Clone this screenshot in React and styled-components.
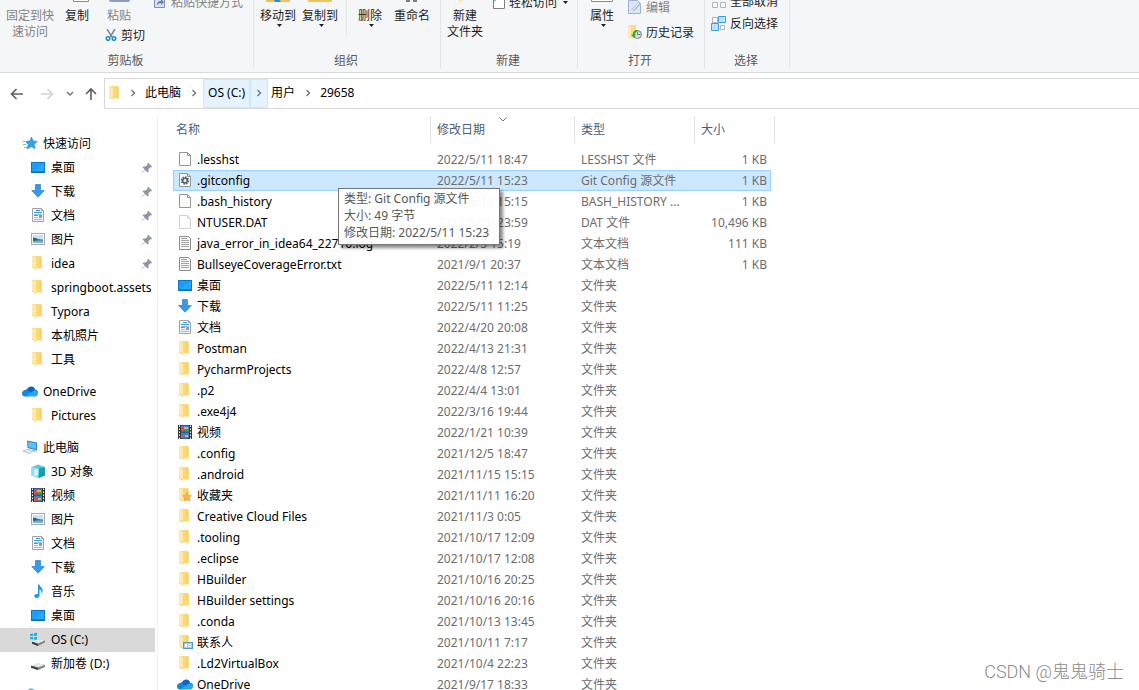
import React from "react";
import styled, { createGlobalStyle, css } from "styled-components";

const GlobalStyle = createGlobalStyle`
  * { box-sizing: border-box; }
  body {
    margin: 0;
    background: #fff;
    color: #000;
    font: 12px/17px "Noto Sans", "Noto Sans CJK SC", sans-serif;
  }
  button {
    font: inherit;
    color: inherit;
    background: none;
    border: 0;
    padding: 0;
  }
  svg { display: block; flex: none; }
  ul { list-style: none; margin: 0; padding: 0; }
`;

const Window = styled.div`
  position: relative;
  display: flex;
  flex-direction: column;
  height: 100vh;
  overflow: hidden;
`;

/* ---------- ribbon ---------- */

const Ribbon = styled.header`
  display: flex;
  flex: none;
  padding-bottom: 3px;
  background: #f5f6f7;
  border-bottom: 1px solid #dadbdc;
`;

const Group = styled.section`
  width: ${(p) => p.$width}px;
  border-right: 1px solid #e2e3e4;
`;

const Tools = styled.div`
  display: flex;
  align-items: flex-end;
  height: 52px;
  padding: 0 0 7px ${(p) => p.$indent || 0}px;
  overflow: hidden;
`;

const GroupLabel = styled.div`
  height: 17px;
  padding: 1px 2px 0 0;
  line-height: 16px;
  text-align: center;
  color: #5a5a5a;
`;

const BigButton = styled.button`
  display: flex;
  flex-direction: column;
  flex: none;
  align-items: center;
  width: ${(p) => p.$width || 42}px;
  height: 73px;
  color: ${(p) => (p.disabled ? "#838383" : "#1e1e1e")};
  line-height: 16px;
  white-space: nowrap;

  svg:first-child { margin-bottom: 4px; }
`;

const PasteColumn = styled.div`
  display: flex;
  flex-direction: column;
  width: 49px;
  margin-left: 11px;
`;

const PasteButton = styled(BigButton)`
  width: 28px;
  height: 53px;
`;

const SmallColumn = styled.div`
  display: flex;
  flex-direction: column;
  flex: none;
  gap: ${(p) => p.$gap || 0}px;
  padding-bottom: ${(p) => p.$bottom}px;
  margin-left: ${(p) => p.$left || 0}px;
`;

const SmallButton = styled.button`
  display: flex;
  align-items: center;
  gap: 4px;
  height: ${(p) => p.$height || 22}px;
  color: ${(p) => (p.disabled ? "#838383" : "#1e1e1e")};
  white-space: nowrap;
`;

const Divider = styled.div`
  align-self: flex-start;
  width: 1px;
  height: 35px;
  margin: 0 2px 0 5px;
  background: #e2e3e4;
`;

const LabelArrow = styled.svg`
  margin-left: 2px;
`;

/* ---------- address bar ---------- */

const NavBar = styled.nav`
  display: flex;
  flex: none;
  align-items: center;
  padding: 5px 0 0;
`;

const NavButtons = styled.div`
  display: flex;
  align-items: center;
  width: 104px;
  padding-left: 10px;
`;

const NavButton = styled.button`
  display: flex;
  justify-content: center;
  width: ${(p) => p.$width}px;
  margin-right: ${(p) => p.$gap || 0}px;
`;

const Address = styled.div`
  display: flex;
  flex: 1;
  align-items: flex-start;
  height: 31px;
  padding-left: 2px;
  border: solid #d9d9d9;
  border-width: 1px 0 1px 1px;

  > svg { margin-top: 6px; }
`;

const Crumb = styled.button`
  display: flex;
  align-items: center;
  height: 29px;
  padding: 0 ${(p) => (p.$active ? 5 : 3)}px 2px;
  ${(p) => p.$active && css`
    background: #e5f3ff;
    box-shadow: inset 0 0 0 1px #cce8ff;
  `}
`;

const CrumbArrow = styled(Crumb)`
  justify-content: center;
  width: ${(p) => (p.$active ? 18 : 19)}px;
  padding: 0 0 1px;
`;

/* ---------- body ---------- */

const Body = styled.div`
  display: flex;
  flex: 1;
  min-height: 0;
  padding-top: 7px;
`;

const Sidebar = styled.aside`
  flex: none;
  width: 158px;
  padding: 16px 2px 0 0;
  border-right: 1px solid #f0f0f0;
  overflow: hidden;
`;

const TreeSection = styled.ul`
  margin-bottom: 8px;
`;

const TreeLink = styled.a`
  display: flex;
  align-items: center;
  gap: 5px;
  height: 24px;
  padding: 0 0 2px ${(p) => (p.$root ? 22 : 30)}px;
  color: #000;
  text-decoration: none;
  white-space: nowrap;
  background: ${(p) => (p.$active ? "#d9d9d9" : "transparent")};

  .pin { margin: 2px 2px 0 auto; }
`;

const Files = styled.table`
  display: block;
  flex: none;
  margin-left: 15px;
`;

const Head = styled.thead`
  display: block;
`;

const HeadRow = styled.tr`
  display: grid;
  grid-template-columns: 258px 144px 120px 80px;
  height: 27px;
  margin-bottom: 6px;
`;

const HeadCell = styled.th`
  position: relative;
  padding: 0 0 0 ${(p) => (p.$first ? 3 : 6)}px;
  border-right: 1px solid #e5e5e5;
  color: #4c607a;
  font-weight: 400;
  line-height: 27px;
  text-align: left;
`;

const SortMark = styled.svg`
  position: absolute;
  top: 1px;
  left: calc(50% - 4px);
`;

const Rows = styled.tbody`
  display: block;
`;

const Row = styled.tr`
  display: grid;
  grid-template-columns: 258px 144px 120px 76px;
  width: 598px;
  height: 21px;
  position: relative;
  ${(p) => p.$selected && css`
    z-index: 1;
    background: #cce8ff;
    box-shadow: inset 0 0 0 1px #99d1ff;
  `}
`;

const Cell = styled.td`
  padding: 0 4px 0 6px;
  color: #6d6d6d;
  line-height: 21px;
  white-space: nowrap;
  text-align: ${(p) => (p.$right ? "right" : "left")};
`;

const NameCell = styled(Cell)`
  display: flex;
  gap: 4px;
  padding-left: 4px;
  color: #000;

  > svg { margin-top: 2px; }
`;

const Tooltip = styled.div`
  position: absolute;
  top: 18px;
  left: 165px;
  min-width: 162px;
  padding: 1px 5px 3px;
  border: 1px solid #767676;
  background: rgba(255, 255, 255, 0.95);
  box-shadow: 3px 3px 3px rgba(0, 0, 0, 0.45);
  color: #575757;
  line-height: 17px;
  white-space: nowrap;
`;

const Watermark = styled.div`
  position: absolute;
  right: 15px;
  bottom: 6px;
  color: #8c8c8c;
  font: 300 18px/24px Roboto, "Noto Sans CJK SC", sans-serif;
`;

/* ---------- icons ---------- */

const Svg = ({ size = 16, children, ...rest }) => (
  <svg width={size} height={size} viewBox={`0 0 ${size} ${size}`} aria-hidden="true" {...rest}>
    {children}
  </svg>
);

const FolderShape = () => (
  <>
    <path d="M2 1h8.500v12H6L2 12z" fill="#f9dc85" />
    <path d="M5.500 1.500h6v8l.5.5v3.500H6z" fill="#fbd872" />
    <path d="M9.500 1.500h2v8h-2z" fill="#f6cf66" />
    <path d="M2 1l4 1.600v12l-4-2z" fill="#fdeab2" />
    <path d="M2 12.600l4 2v-.9l-4-1.600z" fill="#eec35a" />
  </>
);

const icons = {
  folder: () => <Svg><FolderShape /></Svg>,
  favorites: () => (
    <Svg>
      <FolderShape />
      <path d="M10 5.500l1.400 2.700 3.100.5-2.200 2.100.5 3.200-2.800-1.500-2.700 1.500.5-3.200-2.200-2.100 3-.5z" fill="#fbb54a" stroke="#e8962d" strokeWidth=".6" />
    </Svg>
  ),
  contacts: () => (
    <Svg>
      <FolderShape />
      <rect x="6.500" y="8.500" width="9" height="6" fill="#9fd0ea" stroke="#4f9cc4" />
      <path d="M8 10h2v3H8z" fill="#fff" />
      <path d="M11 10.500h3M11 12.500h3" stroke="#fff" />
    </Svg>
  ),
  desktop: () => (
    <Svg>
      <rect x="1.500" y="3.500" width="13" height="10" fill="#1a9dfb" stroke="#0b77c9" />
      <path d="M2 13L14 4v9z" fill="#35adff" opacity=".6" />
      <path d="M2 13h12" stroke="#0a5fa5" />
    </Svg>
  ),
  download: () => (
    <Svg><path d="M5.500 1.500h5v6h3.800L8 14.200 1.700 7.500h3.800z" fill="#3a98e8" stroke="#2781d2" strokeWidth=".7" /></Svg>
  ),
  document: () => (
    <Svg>
      <path d="M2.500 1.500h9l2 2v11h-11z" fill="#f3f6f8" stroke="#9da5aa" />
      <path d="M11.500 1.500v2h2" fill="none" stroke="#9da5aa" />
      <path d="M6 3.500h4M4 5.500h8M4 8.500h4" stroke="#38a0dc" />
      <path d="M4 7.500h8M9 9.500h3M4 10.500h4M4 12.500h8" stroke="#a2bac7" />
      <path d="M9 8h3v3H9z" fill="#6fa8c9" />
    </Svg>
  ),
  picture: () => (
    <Svg>
      <rect x="1.500" y="2.500" width="13" height="11" fill="#fff" stroke="#a5a9ad" />
      <path d="M3 4h10v8H3z" fill="#c4e3f7" />
      <path d="M3 7c3-1 5 2 10 1.500V10H3z" fill="#3d7196" />
      <path d="M3 9.500h10V12H3z" fill="#78b4d4" />
      <path d="M3 6.500c2 .5 3 2 5 2.500l-5 1z" fill="#2e684f" />
    </Svg>
  ),
  video: () => (
    <Svg>
      <path d="M1 1h14v14H1z" fill="#34383d" />
      <path d="M4 1.500h8v6H4zM4 8.500h8v6H4z" fill="#3b7fdc" />
      <path d="M4 5l3-2v4.500H4zM4 12l3-1.500V14H4z" fill="#df513a" />
      <path d="M7 3h4v2H7zM8 11h3v2H8z" fill="#e9b936" />
      <path d="M8 5h4v2.500H8z" fill="#4c9c3f" />
      <path d="M2.500 1.500v14M13.500 1.500v14" stroke="#fff" strokeDasharray="1.500 1.500" />
    </Svg>
  ),
  star: () => (
    <Svg>
      <path d="M9.500 2l1.600 4 4.200.4-3.200 2.900 1 4.500-3.900-2.300-4 2.500 1.100-4.600-2.600-2.800 4.200-.6z" fill="#2fa4ea" stroke="#1b83c8" strokeWidth=".6" />
      <path d="M1 6.500h3M1 9.500h3M2 12.500h3" stroke="#6bbcf0" />
    </Svg>
  ),
  onedrive: () => (
    <Svg>
      <path d="M1.500 9.500C2 7 4 6.500 5 6.500c1-2.500 3-3.200 4.500-3 2 .2 3.300 1.500 3.700 3.200 2 .2 2.800 1.500 2.800 3L9 11z" fill="#0a66c2" />
      <path d="M0 10.500C0 8.500 1.500 7 3.500 7c1.500 0 2.500.6 3.500 1.200L13 12.500 3.500 13.600C1.200 13.600 0 12.200 0 10.500z" fill="#1387da" />
      <path d="M3 13.500L12 7.500c.5-.8 4 0 4 3 0 1.800-1.200 3.100-3 3.100H3.500z" fill="#28a8ea" />
    </Svg>
  ),
  computer: () => (
    <Svg>
      <path d="M5 1.500l10 2v8L5.500 9z" fill="#2d87cc" />
      <path d="M6 2.800l8 1.700v5.600L6.400 8.200z" fill="#5cc0f7" />
      <path d="M1 12l5-2 6 2-5 2.500z" fill="#e3e7ea" stroke="#a1a9ae" strokeWidth=".6" />
      <path d="M9 10.500l2 .5 3.500 1v1z" fill="#7d8a93" />
    </Svg>
  ),
  cube: () => (
    <Svg>
      <path d="M1.500 4L8 1.500 15 4v8.500L9 15l-7.500-2.500z" fill="#57cbdc" />
      <path d="M1.500 4l7 1.500V15l-7-2.500z" fill="#8fe2ec" />
      <path d="M8.500 5.500L15 4v8.500L8.500 15z" fill="#159fb5" />
      <path d="M4 7l4.500-1.500V12L4 13.300z" fill="#e6fbff" opacity=".7" />
    </Svg>
  ),
  music: () => (
    <Svg>
      <path d="M8 1.500h1.500c0 2.500 3.800 3 3 7-.3 1.300-.9 2-1.400 2.500.5-2.500.1-4-1.600-4.700v6c0 1.800-1.400 2.700-2.800 2.700S4.300 14.200 4.300 13c0-1.500 1.900-2.400 3.700-2z" fill="#159be8" />
    </Svg>
  ),
  drive: () => (
    <Svg>
      <path d="M1 11l7-2.500 7 1.500v2L8 15l-7-2.500z" fill="#808589" />
      <path d="M1 10.500L8 8l7 1.800-7 2.700z" fill="#e5e7e8" />
      <path d="M1 10.800l7 2V15l-7-2.300z" fill="#3c4144" />
    </Svg>
  ),
  osdrive: () => (
    <Svg>
      <path d="M2 11l6-2.500 7 1v2L8 15l-6-2.500z" fill="#808589" />
      <path d="M2 10.500L8 8l7 1.500-7 3z" fill="#e5e7e8" />
      <path d="M2 10.800l6 2V15l-6-2.300z" fill="#3c4144" />
      <path d="M0 3l3-.5V5H0zM3.800 2.300L7 1.800V5H3.800zM0 6h3v2.500L0 8zM3.800 6H7v3l-3.200-.4z" fill="#15b6ea" />
    </Svg>
  ),
  network: () => (
    <Svg>
      <path d="M5 4c2-3.500 6-3.500 9 0l1 8-8 2-4-2z" fill="#77aebd" />
    </Svg>
  ),
  blank: () => (
    <Svg>
      <path d="M2.500 1.500h8l3 3v10h-11z" fill="#fcfcfc" stroke="#969696" />
      <path d="M10.500 1.500v3h3" fill="none" stroke="#969696" />
    </Svg>
  ),
  faint: () => (
    <Svg>
      <path d="M2.500 1.500h8l3 3v10h-11z" fill="#fdfdfd" stroke="#d1d1d1" />
      <path d="M10.500 1.500v3h3" fill="none" stroke="#d1d1d1" />
    </Svg>
  ),
  config: () => (
    <Svg>
      <path d="M2.500 1.500h8l3 3v10h-11z" fill="#f8f8f8" stroke="#969696" />
      <path d="M10.500 1.500v3h3" fill="none" stroke="#969696" />
      <circle cx="8" cy="8.500" r="3.400" fill="none" stroke="#53646f" strokeWidth="1.600" strokeDasharray="1.600 1" />
      <circle cx="8" cy="8.500" r="2.300" fill="none" stroke="#53646f" strokeWidth="1.600" />
    </Svg>
  ),
  text: () => (
    <Svg>
      <path d="M2.500 1.500h9l2 2v11h-11z" fill="#fafafa" stroke="#8c8c8c" />
      <path d="M4 3.500h6M4 5.500h8M4 7.500h8M4 9.500h8M4 11.500h8" stroke="#a3a3a3" />
    </Svg>
  ),
};

const Icon = ({ name }) => icons[name]();

const Pin = () => (
  <Svg size={12} className="pin">
    <path d="M7.200.8l4 4-1.100.8-.9-.3-1.700 1.800.1 2.300-1 1-2.500-2.500L.8 11.300l-.3-.3 3.200-3.400L1.500 5.300l1-.9 2.200.1L6.600 2.700l-.3-1z" fill="#8c969e" />
  </Svg>
);

const DownArrow = () => (
  <LabelArrow width="5" height="3" viewBox="0 0 5 3" aria-hidden="true">
    <path d="M0 0h5L2.500 3z" fill="#1e1e1e" />
  </LabelArrow>
);

const Chevron = ({ down }) => (
  <Svg size={8}>
    <path d={down ? "M1 2l3 3 3-3" : "M2.500 1l3 3-3 3"} fill="none" stroke="#707070" strokeWidth="1.300" />
  </Svg>
);

const Big = ({ children }) => <Svg size={32}>{children}</Svg>;
const FolderBig = ({ arrow }) => (
  <Big>
    <path d="M4 6h24v24H4z" fill="#f8d775" />
    <path d="M4 28h24v2H4z" fill="#efc45c" />
    {arrow && <path d="M11 26h5l3 4h-6z" fill="#2d8ac8" />}
  </Big>
);

/* ---------- data ---------- */

const sections = [
  [
    ["star", "快速访问", "root"],
    ["desktop", "桌面", "pin"],
    ["download", "下载", "pin"],
    ["document", "文档", "pin"],
    ["picture", "图片", "pin"],
    ["folder", "idea", "pin"],
    ["folder", "springboot.assets"],
    ["folder", "Typora"],
    ["folder", "本机照片"],
    ["folder", "工具"],
  ],
  [
    ["onedrive", "OneDrive", "root"],
    ["folder", "Pictures"],
  ],
  [
    ["computer", "此电脑", "root"],
    ["cube", "3D 对象"],
    ["video", "视频"],
    ["picture", "图片"],
    ["document", "文档"],
    ["download", "下载"],
    ["music", "音乐"],
    ["desktop", "桌面"],
    ["osdrive", "OS (C:)", "active"],
    ["drive", "新加卷 (D:)"],
  ],
  [["network", "", "root"]],
];

const DIR = "文件夹";
const files = [
  ["blank", ".lesshst", "2022/5/11 18:47", "LESSHST 文件", "1 KB"],
  ["config", ".gitconfig", "2022/5/11 15:23", "Git Config 源文件", "1 KB"],
  ["blank", ".bash_history", "2022/5/11 15:15", "BASH_HISTORY ...", "1 KB"],
  ["faint", "NTUSER.DAT", "2022/5/10 23:59", "DAT 文件", "10,496 KB"],
  ["text", "java_error_in_idea64_22716.log", "2022/2/5 15:19", "文本文档", "111 KB"],
  ["text", "BullseyeCoverageError.txt", "2021/9/1 20:37", "文本文档", "1 KB"],
  ["desktop", "桌面", "2022/5/11 12:14", DIR],
  ["download", "下载", "2022/5/11 11:25", DIR],
  ["document", "文档", "2022/4/20 20:08", DIR],
  ["folder", "Postman", "2022/4/13 21:31", DIR],
  ["folder", "PycharmProjects", "2022/4/8 12:57", DIR],
  ["folder", ".p2", "2022/4/4 13:01", DIR],
  ["folder", ".exe4j4", "2022/3/16 19:44", DIR],
  ["video", "视频", "2022/1/21 10:39", DIR],
  ["folder", ".config", "2021/12/5 18:47", DIR],
  ["folder", ".android", "2021/11/15 15:15", DIR],
  ["favorites", "收藏夹", "2021/11/11 16:20", DIR],
  ["folder", "Creative Cloud Files", "2021/11/3 0:05", DIR],
  ["folder", ".tooling", "2021/10/17 12:09", DIR],
  ["folder", ".eclipse", "2021/10/17 12:08", DIR],
  ["folder", "HBuilder", "2021/10/16 20:25", DIR],
  ["folder", "HBuilder settings", "2021/10/16 20:16", DIR],
  ["folder", ".conda", "2021/10/13 13:45", DIR],
  ["contacts", "联系人", "2021/10/11 7:17", DIR],
  ["folder", ".Ld2VirtualBox", "2021/10/4 22:23", DIR],
  ["onedrive", "OneDrive", "2021/9/17 18:33", DIR],
];

/* ---------- page ---------- */

function RibbonBar() {
  return (
    <Ribbon>
      <Group $width={254}>
        <Tools>
          <BigButton $width={60} disabled>
            <Big />
            <span>固定到快</span>
            <span>速访问</span>
          </BigButton>
          <BigButton $width={34}>
            <Big><path d="M12.500 8.500h15v21h-15z" fill="#fff" stroke="#8d8d8d" /></Big>
            复制
          </BigButton>
          <PasteColumn>
            <PasteButton disabled>
              <Big><path d="M6 2h21v26q0 2-2 2H8q-2 0-2-2z" fill="#8c9cc0" /></Big>
              粘贴
            </PasteButton>
            <SmallButton $height={20}>
              <Svg size={12}>
                <path d="M2 0l5 8M10 0L5 8" stroke="#7e8a94" strokeWidth="1.500" />
                <circle cx="3" cy="9.500" r="1.800" fill="none" stroke="#1f8bd0" strokeWidth="1.500" />
                <circle cx="9" cy="9.500" r="1.800" fill="none" stroke="#1f8bd0" strokeWidth="1.500" />
              </Svg>
              剪切
            </SmallButton>
          </PasteColumn>
          <SmallColumn $bottom={32}>
            <SmallButton disabled>
              <Svg size={13}>
                <path d="M.5.5h10v11H.5z" fill="#d9e0ee" stroke="#7f91b8" />
                <path d="M3 9q0-4 4-4V3l3 3-3 3V7Q5 7 3 9z" fill="#687ca8" />
              </Svg>
              粘贴快捷方式
            </SmallButton>
          </SmallColumn>
        </Tools>
        <GroupLabel>剪贴板</GroupLabel>
      </Group>

      <Group $width={187}>
        <Tools $indent={3}>
          <BigButton><FolderBig arrow />移动到<DownArrow /></BigButton>
          <BigButton><FolderBig />复制到<DownArrow /></BigButton>
          <Divider />
          <BigButton>
            <Big><path d="M5 6l20 21M25 6L5 27" stroke="#d85a50" strokeWidth="3" /></Big>
            删除<DownArrow />
          </BigButton>
          <BigButton>
            <Big><path d="M10 29h4M17 29h4" stroke="#7d7d7d" strokeWidth="2" /></Big>
            重命名
          </BigButton>
        </Tools>
        <GroupLabel>组织</GroupLabel>
      </Group>

      <Group $width={137}>
        <Tools $indent={3}>
          <BigButton>
            <Big><path d="M8 24l3 1 2 5-4-3z" fill="#fbc64e" /></Big>
            <span>新建</span>
            <span>文件夹</span>
          </BigButton>
          <SmallColumn $bottom={32} $left={4}>
            <SmallButton>
              <Svg size={15}>
                <path d="M3.500.5h11v13h-11z" fill="#fff" stroke="#7e7e7e" />
                <path d="M0 4.500h6M4 2.500l2 2-2 2" fill="none" stroke="#2380bf" />
              </Svg>
              轻松访问
              <DownArrow />
            </SmallButton>
          </SmallColumn>
        </Tools>
        <GroupLabel>新建</GroupLabel>
      </Group>

      <Group $width={127}>
        <Tools $indent={3}>
          <BigButton>
            <Big><path d="M5.500 4.500h21v25h-21z" fill="#fff" stroke="#8d8d8d" /></Big>
            属性<DownArrow />
          </BigButton>
          <SmallColumn $bottom={2} $left={5} $gap={3}>
            <SmallButton disabled>
              <Svg size={14}>
                <path d="M.5.500h9l3 3v10H.5z" fill="#dde6f5" stroke="#9fb2d5" />
                <path d="M3 12l1-3 7-7 2 2-7 7z" fill="#a9bbda" />
                <path d="M3 12l8-9" stroke="#fff" />
              </Svg>
              编辑
            </SmallButton>
            <SmallButton>
              <Svg size={14}>
                <path d="M0 0h8v12l-4 1.500L0 12z" fill="#fadb82" />
                <path d="M0 0l3 1.500v12L0 12z" fill="#fdebb5" />
                <circle cx="9.500" cy="9.500" r="4" fill="#d9dcde" stroke="#7b8186" />
                <path d="M9.500 6.500v3h3" fill="none" stroke="#70767b" />
                <path d="M9 5C6 5 4.500 7.500 5 9.500H3L6 13l2-3.500H7C7 8 7.500 7 9 7z" fill="#27ab34" />
              </Svg>
              历史记录
            </SmallButton>
          </SmallColumn>
        </Tools>
        <GroupLabel>打开</GroupLabel>
      </Group>

      <Group $width={85}>
        <Tools $indent={6}>
          <SmallColumn $bottom={11}>
            <SmallButton>
              <Svg size={15}>
                <path d="M1.500 1.500h5v4h-5zM9.500 1.500h5v4h-5zM1.500 8.500h5v5h-5zM9.500 8.500h5v5h-5z" fill="#fafafa" stroke="#b5b5b5" />
              </Svg>
              全部取消
            </SmallButton>
            <SmallButton>
              <Svg size={15}>
                <path d="M1.500 1.500h5v5h-5zM9.500 9.500h4v4h-4z" fill="#fafafa" stroke="#b5b5b5" />
                <path d="M7.500.500h7v6h-7zM.5 7.500h7v7h-7z" fill="#b9e2fb" stroke="#3b9ddd" />
              </Svg>
              反向选择
            </SmallButton>
          </SmallColumn>
        </Tools>
        <GroupLabel>选择</GroupLabel>
      </Group>
    </Ribbon>
  );
}

function AddressBar() {
  return (
    <NavBar>
      <NavButtons>
        <NavButton $width={14} $gap={16} aria-label="Back">
          <Svg size={14}><path d="M13 7H2M6.500 2L1.500 7l5 5" fill="none" stroke="#5f5f5f" strokeWidth="1.600" /></Svg>
        </NavButton>
        <NavButton $width={14} $gap={12} aria-label="Forward">
          <Svg size={14}><path d="M1 7h11M7.500 2l5 5-5 5" fill="none" stroke="#d2d2d2" strokeWidth="1.600" /></Svg>
        </NavButton>
        <NavButton $width={8} $gap={10} aria-label="Recent locations"><Chevron down /></NavButton>
        <NavButton $width={14} aria-label="Up">
          <Svg size={14}><path d="M7 13V2M2 7l5-5 5 5" fill="none" stroke="#5f5f5f" strokeWidth="1.600" /></Svg>
        </NavButton>
      </NavButtons>
      <Address>
        <Icon name="folder" />
        <CrumbArrow aria-label="Expand"><Chevron /></CrumbArrow>
        <Crumb>此电脑</Crumb>
        <CrumbArrow aria-label="Expand"><Chevron /></CrumbArrow>
        <Crumb $active>OS (C:)</Crumb>
        <CrumbArrow $active aria-label="Expand"><Chevron /></CrumbArrow>
        <Crumb>用户</Crumb>
        <CrumbArrow aria-label="Expand"><Chevron /></CrumbArrow>
        <Crumb>29658</Crumb>
      </Address>
    </NavBar>
  );
}

function Tree() {
  return (
    <Sidebar>
      {sections.map((items, i) => (
        <TreeSection key={i}>
          {items.map(([icon, label, kind]) => (
            <li key={icon + label}>
              <TreeLink href="#" $root={kind === "root"} $active={kind === "active"}>
                <Icon name={icon} />
                {label}
                {kind === "pin" && <Pin />}
              </TreeLink>
            </li>
          ))}
        </TreeSection>
      ))}
    </Sidebar>
  );
}

function FileTable() {
  return (
    <Files>
      <Head>
        <HeadRow>
          <HeadCell $first>名称</HeadCell>
          <HeadCell>
            修改日期
            <SortMark width="8" height="5" viewBox="0 0 8 5">
              <path d="M.5.5L4 4 7.500.5" fill="none" stroke="#7a7a7a" />
            </SortMark>
          </HeadCell>
          <HeadCell>类型</HeadCell>
          <HeadCell>大小</HeadCell>
        </HeadRow>
      </Head>
      <Rows>
        {files.map(([icon, name, date, type, size]) => (
          <Row key={name} $selected={name === ".gitconfig"}>
            <NameCell>
              <Icon name={icon} />
              {name}
              {name === ".gitconfig" && (
                <Tooltip role="tooltip">
                  <div>类型: Git Config 源文件</div>
                  <div>大小: 49 字节</div>
                  <div>修改日期: 2022/5/11 15:23</div>
                </Tooltip>
              )}
            </NameCell>
            <Cell>{date}</Cell>
            <Cell>{type}</Cell>
            <Cell $right>{size}</Cell>
          </Row>
        ))}
      </Rows>
    </Files>
  );
}

export default function App() {
  return (
    <Window>
      <GlobalStyle />
      <RibbonBar />
      <AddressBar />
      <Body>
        <Tree />
        <FileTable />
      </Body>
      <Watermark>CSDN @鬼鬼骑士</Watermark>
    </Window>
  );
}
